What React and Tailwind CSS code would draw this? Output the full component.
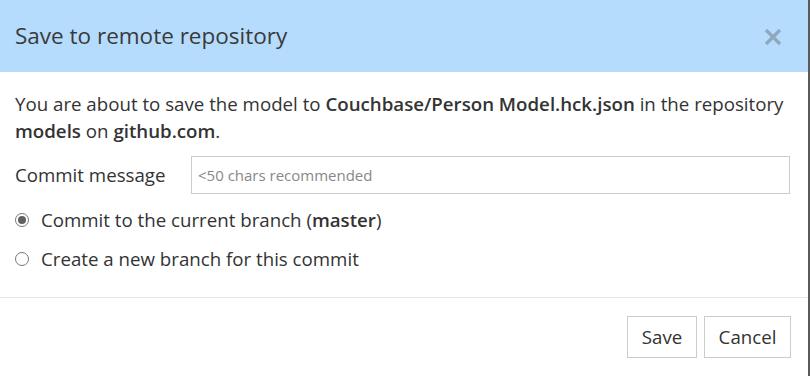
export default function App() {
  return (
    <div className="flex h-[376px] w-[810px] bg-[#5a5a5a]" style={{ fontFamily: '"Open Sans", sans-serif' }}>
      <div className="flex h-full w-[808px] flex-col bg-white text-[#333]">
        <div className="flex h-[72px] items-center justify-between bg-[#b5dcfd] pl-[15px] pr-[26px]">
          <h1 className="text-[22.5px] text-[#3a3a3a]">Save to remote repository</h1>
          <svg width="18" height="18" viewBox="0 0 18 18" className="mt-[1px]">
            <path d="M2 2L16 16M16 2L2 16" stroke="#8fa8bc" strokeWidth="3.2" strokeLinecap="butt" />
          </svg>
        </div>
        <div className="flex flex-col px-[15px] pt-[18px]">
          <p className="text-[18.7px] leading-[27px]">
            You are about to save the model to <b className="font-semibold">Couchbase/Person Model.hck.json</b> in the repository <b className="font-semibold">models</b> on <b className="font-semibold">github.com</b>.
          </p>
          <div className="mt-[12px] flex items-center">
            <label className="w-[176px] text-[18.7px]">Commit message</label>
            <input
              className="mr-[3px] h-[38px] flex-1 border border-[#ccc] px-[6px] text-[15px] outline-none placeholder:text-[#888]"
              placeholder="<50 chars recommended"
            />
          </div>
          <div className="mt-[12px] flex items-center gap-[12px] text-[18.7px] leading-[28px]">
            <span className="flex h-[14px] w-[14px] items-center justify-center rounded-full border border-[#777]">
              <span className="h-[8px] w-[8px] rounded-full bg-[#606060]" />
            </span>
            <span>Commit to the current branch (<b className="font-semibold">master</b>)</span>
          </div>
          <div className="mt-[11px] flex items-center gap-[12px] text-[18.7px] leading-[28px]">
            <span className="h-[14px] w-[14px] rounded-full border border-[#777]" />
            <span>Create a new branch for this commit</span>
          </div>
        </div>
        <div className="mt-[24px] border-t border-[#e5e5e5]" />
        <div className="flex justify-end gap-[7px] pr-[17px] pt-[18px]">
          <button className="h-[42px] w-[70px] border border-[#ccc] bg-white text-[18.7px] text-[#333]">Save</button>
          <button className="h-[42px] w-[87px] border border-[#ccc] bg-white text-[18.7px] text-[#333]">Cancel</button>
        </div>
      </div>
    </div>
  );
}
